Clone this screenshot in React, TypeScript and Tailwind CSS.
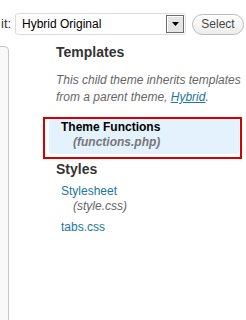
export default function App() {
  return (
    <div className="w-[246px] h-[320px] overflow-hidden bg-white font-['Liberation_Sans',Arial,sans-serif] text-[#333]">
      {/* Top bar: theme picker */}
      <div className="flex items-center pt-[13px] h-[35px]">
        <span className="shrink-0 text-[13px] leading-[22px] text-[#333] pl-[1px] w-[15px]">it:</span>
        <div className="shrink-0 flex items-center w-[171px] h-[22px] border border-[#dcdcdc] rounded-[3px] bg-white pl-[6px] pr-[1px]">
          <span className="flex-1 text-[12px] leading-[15px] text-black">Hybrid Original</span>
          <div className="flex items-center justify-center w-[18px] h-[18px] border border-[#6b6b6b] bg-[#e4e4e4] shadow-[inset_1px_1px_0_#fff]">
            <svg width="7" height="4" viewBox="0 0 7 4">
              <path d="M0 0H7L3.5 4Z" fill="#000" />
            </svg>
          </div>
        </div>
        <button className="shrink-0 ml-[6px] w-[52px] h-[21px] rounded-full border border-[#bbb] bg-gradient-to-b from-white to-[#ededed] text-[12px] leading-[19px] text-[#464646]">
          Select
        </button>
      </div>

      {/* Body */}
      <div className="flex mt-[9px] h-[290px]">
        <div className="shrink-0 w-[9px] mt-[2px] border-t border-r border-[#c6c6c6] rounded-tr-[5px] bg-[#f9f9f9]" />
        <div className="shrink-0 ml-[34px] flex flex-col">
          <h3 className="ml-[13px] text-[14px] leading-[17px] font-bold text-[#333]">Templates</h3>
          <p className="ml-[13px] mt-[11px] w-[195px] text-[12px] leading-[17px] italic text-[#666]">
            This child theme inherits templates from a parent theme,{" "}
            <a className="text-[#21759b] underline">Hybrid</a>.
          </p>

          <div className="mt-[11px] w-[199px] border-2 border-[#d40000] pl-[4px] pr-[1px] pb-[3px]">
            <div className="bg-[#e4f2fd] rounded-[3px] pt-[1px] pb-[4px] pl-[12px]">
              <div className="text-[12px] leading-[15px] font-bold text-black">Theme Functions</div>
              <div className="pl-[12px] text-[12px] leading-[15px] font-bold italic text-[#777]">(functions.php)</div>
            </div>
          </div>

          <h3 className="ml-[13px] mt-[2px] text-[14px] leading-[17px] font-bold text-[#333]">Styles</h3>
          <ul className="ml-[18px] mt-[6px]">
            <li>
              <a className="block text-[12px] leading-[15px] text-[#21759b]">Stylesheet</a>
              <span className="block pl-[12px] text-[12px] leading-[15px] italic text-[#666]">(style.css)</span>
            </li>
            <li className="mt-[6px]">
              <a className="block text-[12px] leading-[15px] text-[#21759b]">tabs.css</a>
            </li>
          </ul>
        </div>
      </div>
    </div>
  );
}
